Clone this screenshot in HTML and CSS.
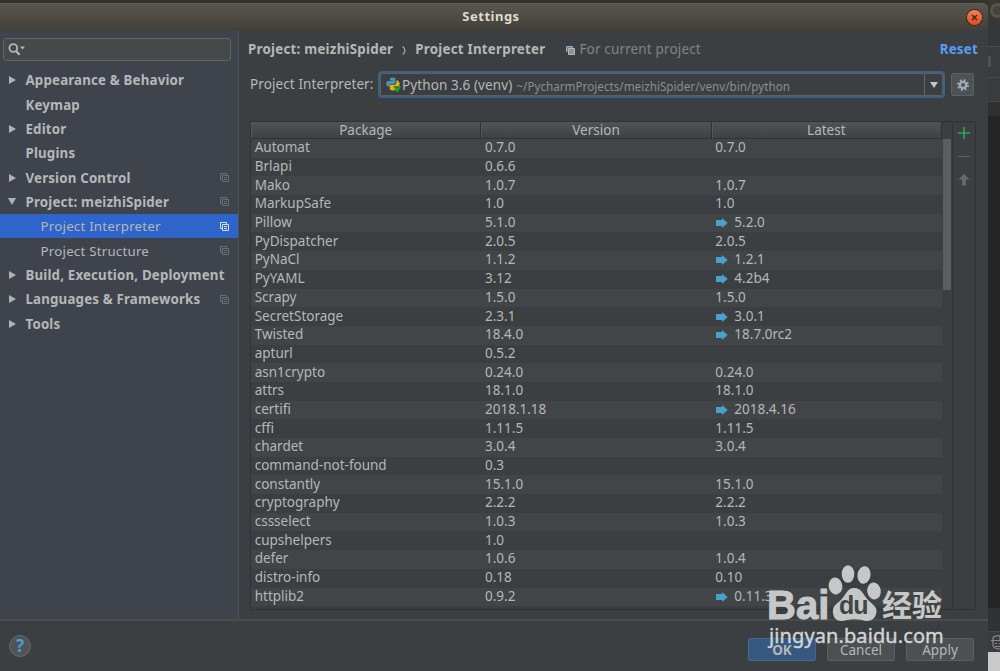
FILE: index.html
```html
<!DOCTYPE html>
<html lang="en">
<head>
    <meta charset="UTF-8">
    <meta name="viewport" content="width=device-width, initial-scale=1.0">
    <title>Settings</title>
    <link rel="stylesheet" href="styles.css">
</head>
<body>
    <svg class="defs" width="0" height="0">
        <symbol id="copy" viewBox="0 0 9 9">
            <path d="M2.5 6.5h-2v-6h6v2M2.5 2.5h6v6h-6zM4 4.5h3M4 6.5h3" fill="none" stroke="currentColor"/>
        </symbol>
        <symbol id="arrow" viewBox="0 0 12 10">
            <path d="M0 2h6V0l5.700 5L6 10V8H0z" fill="#4b9fcb"/>
        </symbol>
    </svg>

    <div class="screen">
        <div class="dialog">
            <div class="titlebar">
                <span class="title">Settings</span>
                <span class="close"><svg width="7" height="7" viewBox="0 0 7 7"><path d="M1 1l5 5M6 1L1 6" stroke="#4a2415" stroke-width="1.4"/></svg></span>
            </div>

            <div class="main">
                <div class="sidebar">
                    <div class="search">
                        <svg width="18" height="13" viewBox="0 0 18 13">
                            <circle cx="5.3" cy="5" r="3.9" fill="none" stroke="#b4b6b7" stroke-width="1.8"/>
                            <path d="M8 8l3.6 3.8" stroke="#b4b6b7" stroke-width="2.2"/>
                            <path d="M12 3.5h5l-2.5 3z" fill="#b4b6b7"/>
                        </svg>
                    </div>
                    <ul class="tree">
                        <li><i class="tri"></i><span>Appearance &amp; Behavior</span></li>
                        <li><span>Keymap</span></li>
                        <li><i class="tri"></i><span>Editor</span></li>
                        <li><span>Plugins</span></li>
                        <li><i class="tri"></i><span>Version Control</span><svg class="copy"><use href="#copy"/></svg></li>
                        <li><i class="tri open"></i><span>Project: meizhiSpider</span><svg class="copy"><use href="#copy"/></svg></li>
                        <li class="child selected"><span>Project Interpreter</span><svg class="copy"><use href="#copy"/></svg></li>
                        <li class="child"><span>Project Structure</span><svg class="copy"><use href="#copy"/></svg></li>
                        <li><i class="tri"></i><span>Build, Execution, Deployment</span></li>
                        <li><i class="tri"></i><span>Languages &amp; Frameworks</span><svg class="copy"><use href="#copy"/></svg></li>
                        <li><i class="tri"></i><span>Tools</span></li>
                    </ul>
                </div>

                <div class="content">
                    <div class="crumbs">
                        <b>Project: meizhiSpider</b>
                        <svg class="chevron" width="4" height="9" viewBox="0 0 4 9"><path d="M.7.5Q3 2.5 3 4.5T.7 8.5" fill="none" stroke="#a9abac" stroke-width="1.2"/></svg>
                        <b>Project Interpreter</b>
                        <svg class="scope-icon" width="9" height="9" viewBox="0 0 9 9">
                            <path d="M.5 6V.5H6.5V2" fill="#5f8299" stroke="#8db1c6"/>
                            <path d="M2.5 2.5h6v6h-6z" fill="#909293" stroke="#b4b6b7"/>
                        </svg>
                        <span class="scope">For current project</span>
                        <b class="reset">Reset</b>
                    </div>

                    <div class="interpreter">
                        <label>Project Interpreter:</label>
                        <div class="combo">
                            <svg width="15" height="15" viewBox="0 0 15 15">
                                <path d="M4 1.200Q6.500-.4 9.400 1.200V5.600Q9 7 7.500 7H5Q3.500 7 3.500 9.500H1.500Q-.9 6.500 1.400 4H6.500V3.400H4z" fill="#4796b8"/>
                                <path d="M10.400 3.500H12Q14.800 6.500 12.800 9.500H7.500V10.300H10V12.500Q7 14.500 3.800 12.500V9Q4 7.800 5.500 7.800H8.500Q10.400 7.500 10.400 5.500z" fill="#e3b51b"/>
                                <path d="M8.500 9l2.700 5 2.700-5" fill="none" stroke="#24a324" stroke-width="2.200"/>
                            </svg>
                            <span class="name">Python 3.6 (venv)</span>
                            <span class="path">~/PycharmProjects/meizhiSpider/venv/bin/python</span>
                            <span class="drop"><i class="tri open"></i></span>
                        </div>
                        <div class="gear">
                            <svg width="12" height="12" viewBox="0 0 12 12">
                                <circle cx="6" cy="6" r="3.100" fill="none" stroke="#a1adb5" stroke-width="2.400"/>
                                <circle cx="6" cy="6" r="4.900" fill="none" stroke="#a1adb5" stroke-width="2" stroke-dasharray="1.925"/>
                            </svg>
                        </div>
                    </div>

                    <div class="packages">
                        <table>
                            <thead>
                                <tr>
                                    <th>Package</th>
                                    <th>Version</th>
                                    <th>Latest</th>
                                </tr>
                            </thead>
                            <tbody id="packages-body"></tbody>
                        </table>
                        <div class="scroll"><div class="thumb"></div></div>
                        <div class="tools">
                            <svg width="12" height="12" viewBox="0 0 12 12"><path d="M6 0v12M0 6h12" stroke="#2fa84f" stroke-width="1.600"/></svg>
                            <svg width="12" height="12" viewBox="0 0 12 12"><path d="M0 5.500h12" stroke="#5c5f60"/></svg>
                            <svg width="12" height="12" viewBox="0 0 12 12"><path d="M6 0l5.500 5.500H8V11.500H4V5.500H.5z" fill="#66696b"/></svg>
                        </div>
                    </div>
                </div>
            </div>

            <div class="footer">
                <span class="help">?</span>
                <button class="ok">OK</button>
                <button>Cancel</button>
                <button>Apply</button>
            </div>
        </div>

        <!-- edge of the IDE window behind the dialog -->
        <div class="behind">
            <div class="b-title"><i></i></div>
            <div class="b-menu"></div>
            <div class="b-nav"><i></i></div>
            <div class="b-tabs"></div>
            <div class="b-gap"></div>
            <div class="b-editor"></div>
            <div class="b-panel"></div>
            <div class="b-status">
                <svg width="10" height="15" viewBox="0 0 10 15"><path d="M2 5V2.500Q5 0 9 1V5M0 5.500h10M2 6v5q2 3 7 3M4 8.500h2M8 8.500h2M4 11.500h5" fill="none" stroke="#858788" stroke-width="1.200"/></svg>
            </div>
            <div class="b-desktop"></div>
        </div>
    </div>

    <div class="watermark">
        <div class="logo">
            <span class="bai">Bai</span>
            <span class="paw">
                <svg width="54" height="57" viewBox="0 0 54 57">
                    <ellipse cx="7.500" cy="21" rx="6.800" ry="8.500" transform="rotate(-8 7.500 21)"/>
                    <ellipse cx="20" cy="9" rx="6.300" ry="8.800"/>
                    <ellipse cx="36" cy="10" rx="6.500" ry="8.800" transform="rotate(10 36 10)"/>
                    <ellipse cx="46" cy="26" rx="6.800" ry="8.500" transform="rotate(-8 46 26)"/>
                    <path d="M26 23C34 23 35 30 41 36C47 41 50 44 48 49C46 56 40 57 34 55Q26 53.500 19 55C12 57 6 56 5 48C4 42 8 39 13 35C18 30 19 23 26 23z"/>
                </svg>
                <span class="du">du</span>
            </span>
            <span class="cn">经验</span>
        </div>
        <div class="url">jingyan.baidu.com</div>
    </div>

    <script>
        // name, installed version, latest version, update available
        const packages = [
            ['Automat', '0.7.0', '0.7.0'],
            ['Brlapi', '0.6.6', ''],
            ['Mako', '1.0.7', '1.0.7'],
            ['MarkupSafe', '1.0', '1.0'],
            ['Pillow', '5.1.0', '5.2.0', true],
            ['PyDispatcher', '2.0.5', '2.0.5'],
            ['PyNaCl', '1.1.2', '1.2.1', true],
            ['PyYAML', '3.12', '4.2b4', true],
            ['Scrapy', '1.5.0', '1.5.0'],
            ['SecretStorage', '2.3.1', '3.0.1', true],
            ['Twisted', '18.4.0', '18.7.0rc2', true],
            ['apturl', '0.5.2', ''],
            ['asn1crypto', '0.24.0', '0.24.0'],
            ['attrs', '18.1.0', '18.1.0'],
            ['certifi', '2018.1.18', '2018.4.16', true],
            ['cffi', '1.11.5', '1.11.5'],
            ['chardet', '3.0.4', '3.0.4'],
            ['command-not-found', '0.3', ''],
            ['constantly', '15.1.0', '15.1.0'],
            ['cryptography', '2.2.2', '2.2.2'],
            ['cssselect', '1.0.3', '1.0.3'],
            ['cupshelpers', '1.0', ''],
            ['defer', '1.0.6', '1.0.4'],
            ['distro-info', '0.18', '0.10'],
            ['httplib2', '0.9.2', '0.11.3', true]
        ];

        const body = document.getElementById('packages-body');
        packages.forEach(([name, version, latest, update]) => {
            const row = body.insertRow();
            row.insertCell().textContent = name;
            row.insertCell().textContent = version;
            const cell = row.insertCell();
            cell.textContent = latest;
            if (update) {
                cell.insertAdjacentHTML('afterbegin', '<svg class="arrow"><use href="#arrow"/></svg>');
            }
        });
    </script>
</body>
</html>
```

FILE: styles.css
```css
* {
    box-sizing: border-box;
}
body {
    margin: 0;
    height: 671px;
    overflow: hidden;
    background-color: #34332f;
    color: #b5b7b8;
    font-family: "Noto Sans", sans-serif;
    font-size: 13.5px;
    white-space: nowrap;
}
svg {
    flex: none;
}
.defs {
    position: absolute;
}
.screen {
    display: flex;
    height: 671px;
}
.dialog {
    display: flex;
    flex-direction: column;
    width: 988px;
    padding-top: 3px;
}
.titlebar {
    display: flex;
    align-items: center;
    height: 28px;
    padding-right: 6px;
    border-radius: 0 6px 0 0;
    background: linear-gradient(#5a574e, #403f39);
    box-shadow: inset 0 1px #625f56;
}
.title {
    flex: 1;
    padding: 0 0 2px 15px;
    text-align: center;
    font-weight: bold;
    font-size: 13px;
    letter-spacing: 0.5px;
    color: #dfdbd2;
}
.close {
    display: flex;
    align-items: center;
    justify-content: center;
    width: 15px;
    height: 15px;
    border-radius: 50%;
    background: linear-gradient(#f4805b, #df4c1e);
    box-shadow: 0 0 0 1px #3b2d25;
}
.main {
    display: flex;
    height: 588px;
    background-color: #3c3f41;
}
.sidebar {
    width: 239px;
    padding-top: 7px;
    background-color: #3f434c;
    border-right: 1px solid #505355;
}
.search {
    display: flex;
    align-items: center;
    width: 228px;
    height: 23px;
    margin-left: 3px;
    padding-left: 4px;
    border: 1px solid #616465;
    border-radius: 3px;
    background-color: #45494a;
}
.tree {
    margin: 7px 0 0;
    padding: 0;
    list-style: none;
    font-weight: bold;
    font-size: 13.3px;
    letter-spacing: 0.17px;
}
.tree li {
    display: grid;
    grid-template-columns: 17.5px 1fr 9px;
    align-items: center;
    height: 24.35px;
    padding: 0 9px 0 8px;
}
.tree span {
    grid-column: 2;
}
.tree .child {
    font-weight: normal;
    grid-template-columns: 32.5px 1fr 9px;
    letter-spacing: 0.22px;
}
.tree .selected {
    background-color: #2f65ca;
}
.tri {
    display: block;
    width: 0;
    margin-left: 1px;
    border: solid transparent;
    border-width: 4.5px 0 4.5px 7.5px;
    border-left-color: #afb1b3;
}
.tri.open {
    margin-left: 0;
    border-width: 7.5px 4.5px 0;
    border-color: #afb1b3 transparent transparent;
}
.copy {
    width: 9px;
    height: 9px;
    color: #6b6f75;
}
.selected .copy {
    color: #d5dff2;
}
.content {
    flex: 1;
    padding: 8px 12px 0 11px;
}
.crumbs {
    display: flex;
    align-items: center;
    height: 21px;
    margin-left: -2px;
    padding-bottom: 1px;
    font-size: 13.3px;
    letter-spacing: 0.25px;
}
.chevron {
    margin: 2px 9px 0 9px;
}
.scope-icon {
    margin: 2px 4px 0 21px;
}
.scope {
    color: #808384;
    font-size: 13.5px;
    letter-spacing: 0.15px;
}
.reset {
    margin-left: auto;
    margin-right: -2px;
    color: #589df6;
}
.interpreter {
    display: flex;
    align-items: center;
    margin-top: 11px;
    height: 27px;
}
.interpreter label {
    width: 128px;
    padding-bottom: 1px;
    letter-spacing: 0.1px;
}
.combo {
    display: flex;
    align-items: center;
    width: 567px;
    height: 27px;
    padding-left: 6px;
    border: 2px solid #3d6185;
    border-radius: 4px;
    box-shadow: inset 0 0 0 1px #5c6062;
}
.name {
    margin: 0 4px 0 1px;
    letter-spacing: 0.1px;
}
.path {
    margin-top: 2px;
    font-size: 11.7px;
    color: #8b8d8e;
}
.drop {
    display: flex;
    align-items: center;
    justify-content: center;
    width: 19px;
    height: 21px;
    margin-left: auto;
    border-left: 1px solid #646768;
}
.drop .tri {
    border-width: 6px 4px 0;
    border-top-color: #c5c7c8;
}
.gear {
    display: flex;
    align-items: center;
    justify-content: center;
    width: 23px;
    height: 23px;
    margin-left: 6px;
    border: 1px solid #5c6062;
    border-radius: 2px;
    background-color: #4e5254;
}
.packages {
    display: flex;
    height: 489px;
    margin-top: 23px;
    border: 1px solid #303234;
    background-color: #3c3f41;
}
.packages table {
    width: 691px;
    height: 484px;
    table-layout: fixed;
    border-collapse: separate;
    border-spacing: 0;
}
.packages th {
    height: 17px;
    padding: 0;
    border-right: 1px solid #2e3032;
    border-bottom: 1px solid #303234;
    background: linear-gradient(#505456, #3e4143);
    box-shadow: inset 1px 0 #55585a;
    font-weight: normal;
    line-height: 15px;
}
.packages td {
    height: 18.7px;
    padding: 0 0 1px 3.7px;
    line-height: 17px;
}
.packages tbody tr:nth-child(odd) {
    background-color: #414547;
}
.arrow {
    width: 12px;
    height: 10px;
    margin: 0 6px 0 1px;
    vertical-align: -1px;
}
.scroll {
    width: 10px;
    padding: 17px 1px 0;
}
.thumb {
    height: 151px;
    background-color: #5b5e5f;
}
.tools {
    display: flex;
    flex-direction: column;
    align-items: center;
    gap: 11.5px;
    flex: 1;
    padding: 5px 1px 0 0;
    border-left: 1px solid #303234;
}
.footer {
    display: flex;
    align-items: center;
    gap: 11px;
    flex: 1;
    padding: 7px 14px 0 9px;
    border-top: 2px solid #4a4c4e;
    background-color: #3c3f41;
}
.help {
    width: 22px;
    height: 22px;
    margin-right: auto;
    margin-bottom: 7px;
    border: 1px solid #65696c;
    border-radius: 50%;
    background-color: #505457;
    color: #4b9fd0;
    font-weight: bold;
    font-size: 17px;
    line-height: 20px;
    text-align: center;
}
button {
    width: 68px;
    height: 23px;
    padding: 0;
    border: 1px solid #5c6062;
    border-radius: 2px;
    background-color: #4c5052;
    color: #b5b7b8;
    font-family: inherit;
    font-size: 13.5px;
    line-height: 18px;
}
button.ok {
    border-color: #43698f;
    background-color: #365880;
    font-weight: bold;
}
.behind {
    flex: 1;
    overflow: hidden;
    background-color: #262626;
}
.b-title {
    height: 23px;
    padding: 3px 0 0 2px;
    background-color: #393833;
}
.b-title i {
    display: flex;
    width: 15px;
    height: 15px;
    border: 3px solid #55534c;
    border-radius: 50%;
    background-color: #45433e;
}
.b-menu {
    height: 24px;
    background-color: #35383a;
    border-bottom: 1px solid #4d4f50;
}
.b-nav {
    height: 31px;
    padding-top: 9px;
    background-color: #393c3e;
    border-bottom: 1px solid #464849;
}
.b-nav i {
    display: block;
    width: 3px;
    height: 11px;
    background-color: #505354;
}
.b-tabs {
    height: 24px;
    background-color: #393c3e;
    border-bottom: 1px solid #464849;
}
.b-gap {
    height: 14px;
    background-color: #303030;
}
.b-editor {
    height: 492px;
    background-color: #252525;
}
.b-panel {
    height: 24px;
    background-color: #303234;
    border-bottom: 1px solid #464849;
}
.b-status {
    height: 20px;
    padding: 3px 0 0 3px;
    background-color: #393c3e;
}
.b-desktop {
    height: 19px;
    background-color: #c9c9c9;
}
.watermark {
    position: absolute;
    left: 767px;
    top: 565px;
    color: #d2d4d4;
}
.logo {
    display: flex;
    height: 57px;
}
.bai {
    width: 61px;
    padding-top: 15px;
    font-family: "Liberation Sans", sans-serif;
    font-weight: bold;
    font-size: 40px;
    line-height: 50px;
    color: #c6c8c8;
    -webkit-text-stroke: 1px #c6c8c8;
}
.paw {
    position: relative;
    width: 54px;
}
.paw svg {
    fill: #c6c8c8;
}
.du {
    position: absolute;
    left: 11px;
    top: 27px;
    color: #414547;
    font-family: "Liberation Sans", sans-serif;
    font-weight: bold;
    font-size: 25px;
    line-height: 26px;
    letter-spacing: -1px;
}
.cn {
    color: #c6c8c8;
    font-family: "Noto Sans CJK SC", sans-serif;
    font-weight: bold;
    font-size: 30px;
    line-height: 76px;
}
.url {
    font-size: 20px;
    line-height: 24px;
    margin: 2px 0 0 2px;
    letter-spacing: 0.1px;
    -webkit-text-stroke: 0.4px #d2d4d4;
}
```
